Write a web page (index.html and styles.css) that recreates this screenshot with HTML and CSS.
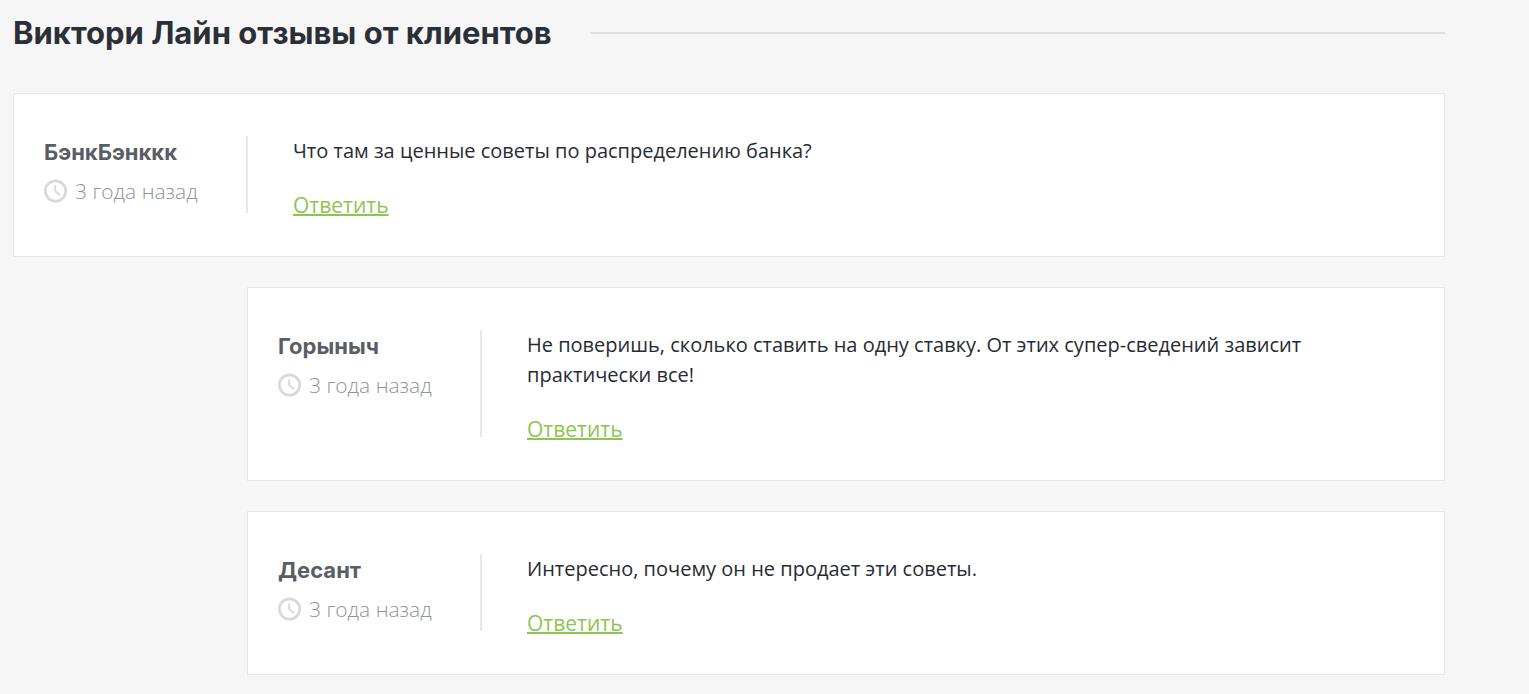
FILE: index.html
```html
<!DOCTYPE html>
<html lang="ru">
<head>
<meta charset="utf-8">
<meta name="viewport" content="width=device-width, initial-scale=1">
<title>Виктори Лайн отзывы от клиентов</title>
<link rel="stylesheet" href="styles.css">
</head>
<body>
<svg class="sprite" aria-hidden="true"><symbol id="clock" viewBox="0 0 24 24"><circle cx="11.5" cy="12" r="10.2" fill="none" stroke="currentColor" stroke-width="2.8"/><path d="M11.2 6.2v6l5 4" fill="none" stroke="currentColor" stroke-width="1.9"/></symbol></svg>
<main class="reviews">
  <h1 class="title">Виктори Лайн отзывы от клиентов</h1>
  <article class="card">
    <div class="meta"><h2 class="author">БэнкБэнккк</h2><p class="date"><svg class="clock"><use href="#clock"/></svg>3 года назад</p></div>
    <div class="body"><p class="text">Что там за ценные советы по распределению банка?</p><a class="reply" href="#">Ответить</a></div>
  </article>
  <article class="card nested">
    <div class="meta"><h2 class="author">Горыныч</h2><p class="date"><svg class="clock"><use href="#clock"/></svg>3 года назад</p></div>
    <div class="body"><p class="text">Не поверишь, сколько ставить на одну ставку. От этих супер-сведений зависит практически все!</p><a class="reply" href="#">Ответить</a></div>
  </article>
  <article class="card nested">
    <div class="meta"><h2 class="author">Десант</h2><p class="date"><svg class="clock"><use href="#clock"/></svg>3 года назад</p></div>
    <div class="body"><p class="text">Интересно, почему он не продает эти советы.</p><a class="reply" href="#">Ответить</a></div>
  </article>
</main>
</body>
</html>
```
FILE: styles.css
```css
* { box-sizing: border-box; }
body { margin: 0; background: #f6f6f6; color: #262c33; font-family: "Open Sans", "Noto Sans", sans-serif; }
.sprite { display: none; }
.reviews { padding: 13px 84px 19px 13px; }
.title { display: flex; align-items: center; gap: 38px; margin: 0 0 40px; color: #2a3036; font: 700 31px/40px Inter, sans-serif; }
.title::after { content: ""; flex: 1; height: 2px; background: #dfdfdf; }
.card { display: flex; margin-bottom: 30px; padding: 42px 30px 35px; background: #fff; border: 1px solid #e6e6e6; }
.card:last-child { margin-bottom: 0; }
.nested { margin-left: 234px; }
.meta { flex: 0 0 204px; margin-bottom: 8px; border-right: 2px solid #e8e8e8; }
.author { margin: 0; color: #595d64; font: 700 22px/32px Inter, sans-serif; }
.date { display: flex; align-items: center; gap: 7px; margin: 8px 0 0; color: #909499; font: 300 21px/30px "Open Sans", sans-serif; white-space: nowrap; }
.clock { width: 24px; height: 24px; color: #d8d9d9; }
.body { flex: 1; padding: 0 88px 0 45px; }
.text { margin: 0 0 27px; font-size: 20px; line-height: 30px; }
.reply { display: block; width: fit-content; margin-bottom: 3px; color: #8cc650; font-size: 21px; line-height: 25px; text-decoration: underline; text-decoration-thickness: 2px; }
```
